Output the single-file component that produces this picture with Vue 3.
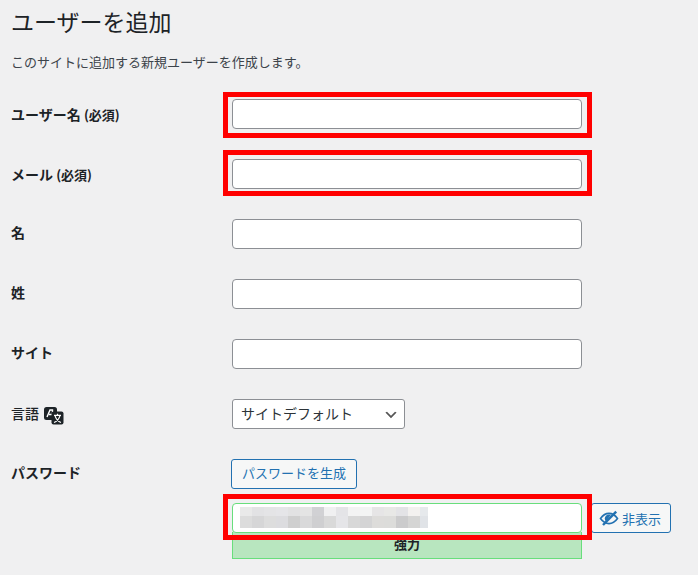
<template>
  <div class="page">
    <h1>ユーザーを追加</h1>
    <p class="lead">このサイトに追加する新規ユーザーを作成します。</p>

    <form class="user-form" @submit.prevent>
      <div v-for="row in textRows" :key="row.label" class="row">
        <label class="label" :class="{ 'label-req': row.required }">{{ row.label }} <small v-if="row.required">(必須)</small></label>
        <div class="field">
          <input class="text-input" type="text" />
          <span v-if="row.mark" class="mark" :class="row.mark"></span>
        </div>
      </div>

      <div class="row">
        <label class="label label-lang">
          言語
          <!-- 翻訳アイコン -->
          <svg class="lang-icon" width="20" height="18" viewBox="0 0 20 18">
            <rect x="0" y="0" width="13" height="13" rx="2.5" fill="#1d2327" />
            <path d="M3 10 L6 3 H8.5 V8 M5 7.5 H8" fill="none" stroke="#fff" stroke-width="1.4" />
            <rect x="7.5" y="4.5" width="12" height="13" rx="2" fill="#1d2327" />
            <path d="M10 8.4 H17 M13.5 6.8 V8.4 M11 8.6 C12 12 14 14.5 17 15.5 M16 8.6 C15 12 13 14.5 10 15.5" fill="none" stroke="#fff" stroke-width="1.2" />
          </svg>
        </label>
        <div class="field">
          <select class="lang-select">
            <option>サイトデフォルト</option>
          </select>
        </div>
      </div>

      <div class="row row-password">
        <label class="label">パスワード</label>
        <div class="field">
          <button class="btn btn-generate" type="button">パスワードを生成</button>
          <div class="pass-line">
            <div class="pass-box">
              <div class="pass-input">
                <!-- ぼかし部分 -->
                <div class="blur">
                  <i v-for="(c, i) in blurCells" :key="i" :style="{ background: c }"></i>
                </div>
              </div>
              <div class="strength">強力</div>
              <span class="mark mark-pass"></span>
            </div>
            <button class="btn btn-hide" type="button">
              <svg width="20" height="20" viewBox="0 0 20 20">
                <path d="M1.5 10.5 C4 7 7 5.4 10 5.4 C13 5.4 16 7 18.5 10.5 C16 14 13 15.6 10 15.6 C7 15.6 4 14 1.5 10.5 Z" fill="none" stroke="#2271b1" stroke-width="1.6" />
                <path d="M5.8 10.5 C5.8 8.2 7.7 6.4 10 6.4 L12 6.8 L6.8 13.4 C6.2 12.6 5.8 11.6 5.8 10.5 Z" fill="#2271b1" />
                <path d="M4 17 L17.2 3.6" stroke="#2271b1" stroke-width="2.4" />
              </svg>
              非表示
            </button>
          </div>
        </div>
      </div>
    </form>
  </div>
</template>

<script setup>
const textRows = [
  { label: 'ユーザー名', required: true, mark: 'mark-top' },
  { label: 'メール', required: true, mark: 'mark-bottom' },
  { label: '名' },
  { label: '姓' },
  { label: 'サイト' }
]

// モザイクの色（2段×16列）
const blurCells = [
  '#e9e9e9', '#e2e2e4', '#e4e4e6', '#e5e5e8', '#e2e2e3', '#e4e4e4', '#d1d1d4', '#f0f0f1',
  '#e4e4e7', '#f3f3f3', '#f3f4f4', '#e6e5e6', '#e8e8e6', '#e3e3e6', '#f3f1ef', '#e6e9ec',
  '#dcdcdc', '#d6d6d7', '#dddddd', '#dcdcdf', '#cfcfcf', '#d9d9da', '#cfcfd1', '#d9d9d9',
  '#e5e5e8', '#d8d8d8', '#d4d4d5', '#dddcda', '#dcdcda', '#cbcbcc', '#d5d5d4', '#e0e3e7'
]
</script>

<style>
html,
body {
  background: #f0f0f1;
}
</style>

<style scoped>
.page {
  box-sizing: border-box;
  width: 698px;
  height: 575px;
  overflow: hidden;
  padding: 0 0 0 11px;
  color: #1d2327;
  font-family: "Noto Sans CJK JP", "Liberation Sans", sans-serif;
  font-size: 13px;
}

h1 {
  margin: 0;
  font-size: 23px;
  font-weight: 400;
  line-height: 42px;
}

.lead {
  margin: 0;
  padding-top: 10px;
  line-height: 20px;
  height: 47px;
  color: #3c434a;
}

.row {
  display: grid;
  grid-template-columns: 221px 350px;
  height: 60px;
}

.label {
  font-size: 14px;
  font-weight: 700;
  line-height: 27px;
}

.label-req {
  line-height: 30px;
}

.label-lang {
  font-weight: 500;
  line-height: 29px;
}

.label small {
  font-size: 13px;
}

.field {
  position: relative;
}

.text-input {
  display: block;
  box-sizing: border-box;
  width: 350px;
  height: 30px;
  background: #fff;
  border: 1px solid #8c8f94;
  border-radius: 4px;
}

.mark {
  position: absolute;
  box-sizing: border-box;
  left: -9px;
  right: -10px;
  height: 46px;
  border: 5px solid #f00;
  pointer-events: none;
}

.mark-top {
  top: -7px;
}

.mark-bottom {
  top: -9px;
}

.mark-pass {
  top: -9px;
  z-index: 2;
}

.lang-icon {
  vertical-align: -6px;
  margin-left: 2px;
}

.lang-select {
  display: block;
  appearance: none;
  box-sizing: border-box;
  width: 173px;
  height: 30px;
  padding: 0 24px 2px 8px;
  color: #2c3338;
  font: inherit;
  font-size: 14px;
  background: #fff url('data:image/svg+xml;charset=US-ASCII,%3Csvg%20width%3D%2220%22%20height%3D%2220%22%20xmlns%3D%22http%3A%2F%2Fwww.w3.org%2F2000%2Fsvg%22%3E%3Cpath%20d%3D%22M5%206l5%205%205-5%202%201-7%207-7-7%202-1z%22%20fill%3D%22%23555%22%2F%3E%3C%2Fsvg%3E') no-repeat right 5px top 55%;
  background-size: 16px 16px;
  border: 1px solid #8c8f94;
  border-radius: 3px;
}

.btn {
  display: block;
  box-sizing: border-box;
  height: 30px;
  padding: 0 10px;
  margin-left: -1px;
  color: #2271b1;
  font: inherit;
  font-size: 13px;
  background: #f6f7f7;
  border: 1px solid #2271b1;
  border-radius: 3px;
}

.btn-generate {
  padding-bottom: 3px;
}

.pass-line {
  display: flex;
  gap: 9px;
  margin-top: 14px;
}

.pass-box {
  position: relative;
  width: 350px;
  flex: none;
}

.pass-input {
  position: relative;
  z-index: 1;
  box-sizing: border-box;
  height: 30px;
  padding: 3px 0 0 7px;
  background: #fff;
  border: 1px solid #68de7c;
  border-radius: 4px;
}

.blur {
  display: grid;
  grid-template-columns: repeat(15, 12px) 8px;
  grid-template-rows: 9px 12px;
}

.strength {
  box-sizing: border-box;
  height: 27px;
  margin-top: -1px;
  font-weight: 700;
  line-height: 24px;
  text-align: center;
  background: #b8e6bf;
  border: 1px solid #68de7c;
  border-top: none;
}

.btn-hide {
  display: flex;
  align-items: center;
  gap: 3px;
  flex: none;
  width: 80px;
  padding: 0 0 0 7px;
  margin-left: 0;
}
</style>
